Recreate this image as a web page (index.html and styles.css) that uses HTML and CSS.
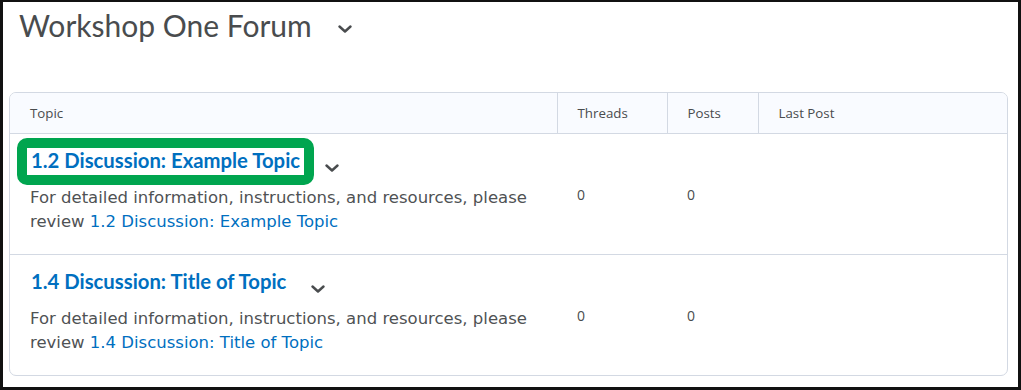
FILE: index.html
```html
<!DOCTYPE html>
<html lang="en">
<head>
<meta charset="utf-8">
<title>Workshop One Forum</title>
<link rel="stylesheet" href="styles.css">
</head>
<body>
<div class="frame">
  <header class="page-head">
    <h1 class="page-title">Workshop One Forum</h1>
    <button class="chev chev-title" aria-label="Actions for Workshop One Forum">
      <svg viewBox="0 0 14 8" width="14" height="8"><path d="M1.5 1.5 L7 6.5 L12.5 1.5" /></svg>
    </button>
  </header>

  <div class="table-wrap">
    <table class="forum-table">
      <thead>
        <tr>
          <th class="col-topic">Topic</th>
          <th class="col-threads">Threads</th>
          <th class="col-posts">Posts</th>
          <th class="col-last">Last Post</th>
        </tr>
      </thead>
      <tbody>
        <tr>
          <td class="topic-cell">
            <div class="topic-head">
              <span class="mark"><a class="topic-link" href="#">1.2 Discussion: Example Topic</a></span>
              <button class="chev chev-topic" aria-label="Actions">
                <svg viewBox="0 0 14 8" width="14" height="8"><path d="M1.5 1.5 L7 6.5 L12.5 1.5" /></svg>
              </button>
            </div>
            <p class="topic-desc">For detailed information, instructions, and resources, please review <a href="#">1.2 Discussion: Example Topic</a></p>
          </td>
          <td class="num">0</td>
          <td class="num">0</td>
          <td class="num"></td>
        </tr>
        <tr>
          <td class="topic-cell">
            <div class="topic-head">
              <a class="topic-link" href="#">1.4 Discussion: Title of Topic</a>
              <button class="chev chev-topic" aria-label="Actions">
                <svg viewBox="0 0 14 8" width="14" height="8"><path d="M1.5 1.5 L7 6.5 L12.5 1.5" /></svg>
              </button>
            </div>
            <p class="topic-desc">For detailed information, instructions, and resources, please review <a href="#">1.4 Discussion: Title of Topic</a></p>
          </td>
          <td class="num">0</td>
          <td class="num">0</td>
          <td class="num"></td>
        </tr>
      </tbody>
    </table>
  </div>
</div>
</body>
</html>
```

FILE: styles.css
```css
* { box-sizing: border-box; }

html, body {
  margin: 0;
  padding: 0;
  background: #fff;
}

.frame {
  width: 1021px;
  height: 390px;
  border-style: solid;
  border-color: #111;
  border-width: 2px 3px 3px 3px;
  padding: 0 11px 0 6px;
  background: #fff;
  overflow: hidden;
}

.page-head {
  display: flex;
  height: 90px;
  align-items: flex-start;
  padding: 3px 0 0 10px;
}

.page-title {
  margin: 0;
  font-family: Lato, "Liberation Sans", sans-serif;
  font-weight: 400;
  font-size: 30px;
  line-height: 40px;
  color: #494c4e;
}

.chev {
  display: inline-flex;
  align-items: center;
  justify-content: center;
  border: 0;
  background: transparent;
  padding: 0;
  width: 24px;
  height: 24px;
}

.chev svg path {
  fill: none;
  stroke: #494c4e;
  stroke-width: 2.4;
  stroke-linecap: round;
  stroke-linejoin: round;
}

.chev-title {
  margin: 12px 0 0 21px;
}

.table-wrap {
  border: 1px solid #d3d9e3;
  border-radius: 7px;
  overflow: hidden;
  width: 999px;
}

.forum-table {
  width: 100%;
  border-collapse: collapse;
  table-layout: fixed;
}

.forum-table th {
  background: #f9fbff;
  height: 40px;
  padding: 0 20px;
  text-align: left;
  font-family: "Open Sans", "Noto Sans", sans-serif;
  font-weight: 400;
  font-size: 13.3px;
  color: #494c4e;
  border-bottom: 1px solid #d3d9e3;
  border-left: 1px solid #d3d9e3;
}

.forum-table th:first-child { border-left: 0; }

.col-topic { width: 547px; }
.col-threads { width: 110px; }
.col-posts { width: 91px; }

.forum-table tbody tr + tr td { border-top: 1px solid #d3d9e3; }

.forum-table td {
  vertical-align: top;
  padding: 0 20px;
}

.topic-cell {
  height: 121px;
  padding: 13px 20px 0 21px !important;
}

.topic-head {
  display: flex;
  align-items: flex-start;
  height: 28px;
}

.topic-link {
  font-family: Lato, "Liberation Sans", sans-serif;
  font-weight: 700;
  font-size: 20.3px;
  line-height: 27px;
  color: #006fbf;
  text-decoration: none;
}

.mark {
  display: inline-block;
  border: 10px solid #00a54f;
  border-radius: 10px;
  background: #fff;
  padding: 0 4px;
  margin: -9px -14px -9px -14px;
  line-height: 24px;
}

.mark .topic-link { line-height: 24px; }

.chev-topic {
  margin: 9px 0 0 20px;
}

.topic-desc {
  margin: 11px 0 0 -1px;
  font-family: "DejaVu Sans", Verdana, sans-serif;
  font-size: 16.5px;
  line-height: 24px;
  color: #4f5254;
}

.topic-desc a {
  color: #006fbf;
  text-decoration: none;
}

.num {
  padding-top: 51px !important;
  font-family: "Open Sans", "Noto Sans", sans-serif;
  font-size: 14px;
  line-height: 20px;
  color: #494c4e;
}
```
